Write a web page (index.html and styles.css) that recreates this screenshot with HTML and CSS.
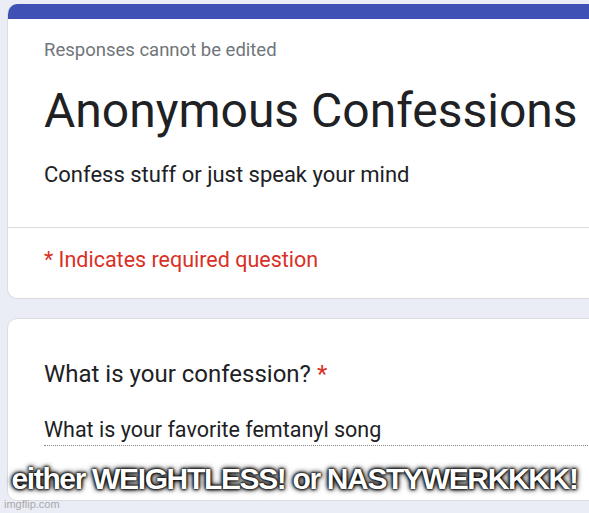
FILE: index.html
```html
<!DOCTYPE html>
<html>
<head>
<meta charset="utf-8">
<link rel="stylesheet" href="styles.css">
</head>
<body>
<div class="page">
  <div class="card header-card">
    <div class="bar"></div>
    <div class="head-body">
      <div class="note">Responses cannot be edited</div>
      <div class="title">Anonymous Confessions</div>
      <div class="desc">Confess stuff or just speak your mind</div>
    </div>
    <div class="divider"></div>
    <div class="required">* Indicates required question</div>
  </div>
  <div class="card question-card">
    <div class="question">What is your confession? <span class="star">*</span></div>
    <div class="answer">What is your favorite femtanyl song</div>
  </div>
</div>
<div class="caption">either WEIGHTLESS! or NASTYWERKKKK!</div>
<div class="watermark">imgflip.com</div>
</body>
</html>
```
FILE: styles.css
```css
html, body {
  margin: 0;
  padding: 0;
}
body {
  width: 589px;
  height: 513px;
  overflow: hidden;
  background: #eaecf6;
  position: relative;
  font-family: Roboto, "Liberation Sans", sans-serif;
}
.page {
  padding: 4px 0 0 7px;
  display: flex;
  flex-direction: column;
  gap: 19px;
}
.card {
  width: 640px;
  background: #fff;
  border: 1px solid #dadce0;
  border-radius: 10px;
  overflow: hidden;
  box-sizing: border-box;
}
.header-card {
  height: 295px;
  border-top: none;
}
.bar {
  height: 15px;
  background: #3f51b5;
}
.head-body {
  padding: 20px 0 0 36px;
  height: 208px;
  box-sizing: border-box;
}
.note {
  font-size: 18.5px;
  color: #70757a;
  line-height: 22px;
}
.title {
  font-size: 48px;
  color: #202124;
  line-height: 56px;
  margin-top: 22px;
}
.desc {
  font-size: 22px;
  color: #202124;
  line-height: 28px;
  margin-top: 22px;
}
.divider {
  height: 1px;
  background: #dadce0;
}
.required {
  padding: 18px 0 0 36px;
  font-size: 21.5px;
  line-height: 28px;
  color: #d93025;
}
.question-card {
  height: 183px;
}
.question {
  padding: 40px 0 0 36px;
  font-size: 24px;
  line-height: 30px;
  color: #202124;
}
.star {
  color: #d93025;
}
.answer {
  margin: 28px 0 0 36px;
  font-size: 21.5px;
  line-height: 26px;
  color: #202124;
  padding-bottom: 2px;
  border-bottom: 1px dotted #8a8a8a;
}
.caption {
  position: absolute;
  left: 0;
  top: 462px;
  width: 589px;
  text-align: center;
  font-family: "Liberation Sans", Arial, sans-serif;
  font-weight: bold;
  font-size: 30px;
  line-height: 34px;
  letter-spacing: -1.35px;
  color: #fff;
  text-shadow: 0 0 2px #000, 0 0 3px #000, 0 0 4px #000, 0 0 6px #000;
}
.watermark {
  position: absolute;
  left: 4px;
  top: 498px;
  font-family: "Liberation Sans", Arial, sans-serif;
  font-size: 11px;
  color: #a9a9a9;
}
```
